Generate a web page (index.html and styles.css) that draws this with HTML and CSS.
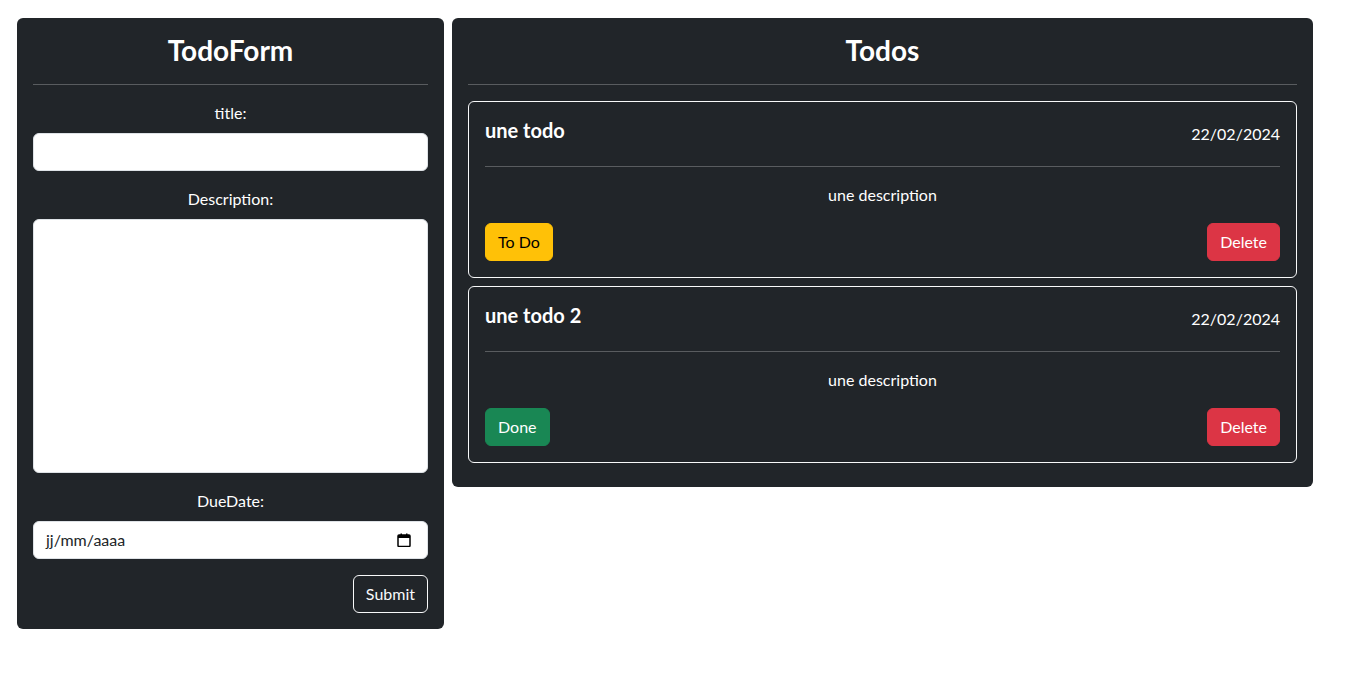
FILE: index.html
```html
<!DOCTYPE html>
<html lang="fr">
<head>
<meta charset="utf-8">
<title>Todos</title>
<link rel="stylesheet" href="styles.css">
</head>
<body>
<div class="app">
  <section class="panel form-panel">
    <h3 class="panel-title">TodoForm</h3>
    <hr class="rule">
    <form class="todo-form">
      <div class="field">
        <label class="field-label" for="title">title:</label>
        <input class="control" id="title" type="text">
      </div>
      <div class="field">
        <label class="field-label" for="desc">Description:</label>
        <textarea class="control area" id="desc"></textarea>
      </div>
      <div class="field">
        <label class="field-label">DueDate:</label>
        <div class="control date">
          <span class="date-text">jj/mm/aaaa</span>
          <svg class="cal" width="14" height="14" viewBox="0 0 14 14">
            <rect x="1" y="2" width="12" height="11.5" rx="1" fill="none" stroke="#000" stroke-width="1.5"/>
            <rect x="1" y="2" width="12" height="3" fill="#000"/>
            <rect x="3.5" y="0.5" width="1.5" height="2.5" fill="#000"/>
            <rect x="9" y="0.5" width="1.5" height="2.5" fill="#000"/>
          </svg>
        </div>
      </div>
      <div class="actions">
        <button type="button" class="btn btn-outline">Submit</button>
      </div>
    </form>
  </section>

  <section class="panel list-panel">
    <h3 class="panel-title">Todos</h3>
    <hr class="rule">
    <div class="todo">
      <div class="todo-head">
        <h5 class="todo-title">une todo</h5>
        <span class="todo-date">22/02/2024</span>
      </div>
      <hr class="rule">
      <p class="todo-desc">une description</p>
      <div class="todo-actions">
        <button type="button" class="btn btn-warning">To Do</button>
        <button type="button" class="btn btn-danger">Delete</button>
      </div>
    </div>
    <div class="todo">
      <div class="todo-head">
        <h5 class="todo-title">une todo 2</h5>
        <span class="todo-date">22/02/2024</span>
      </div>
      <hr class="rule">
      <p class="todo-desc">une description</p>
      <div class="todo-actions">
        <button type="button" class="btn btn-success">Done</button>
        <button type="button" class="btn btn-danger">Delete</button>
      </div>
    </div>
  </section>
</div>
</body>
</html>
```

FILE: styles.css
```css
* { box-sizing: border-box; }

body {
  margin: 0;
  background: #fff;
  font-family: Lato, "Noto Sans", sans-serif;
  font-size: 16px;
  line-height: 1.5;
  color: #212529;
}

.app {
  display: flex;
  align-items: flex-start;
  gap: 8px;
  padding: 18px 0 0 17px;
}

.panel {
  background: #212529;
  color: #fff;
  border-radius: 6px;
  padding: 16px;
}

.form-panel { width: 427px; }
.list-panel { width: 861px; }

.panel-title {
  margin: 0;
  font-size: 28px;
  font-weight: 700;
  line-height: 1.2;
  text-align: center;
}

.rule {
  margin: 16px 0;
  border: 0;
  border-top: 1px solid #595c5f;
  height: 0;
}

.todo-form { display: flex; flex-direction: column; gap: 16px; }

.field { display: flex; flex-direction: column; }

.field-label {
  text-align: center;
  margin-bottom: 8px;
  line-height: 24px;
}

.control {
  display: block;
  width: 100%;
  height: 38px;
  padding: 6px 12px;
  font: inherit;
  color: #212529;
  background: #fff;
  border: 1px solid #dee2e6;
  border-radius: 6px;
}

.area {
  height: 254px;
  resize: none;
}

.date {
  display: flex;
  align-items: center;
  justify-content: space-between;
  padding-right: 16px;
}

.date-text { line-height: 24px; }

.cal { display: block; }

.actions { display: flex; justify-content: flex-end; }

.btn {
  font: inherit;
  line-height: 24px;
  padding: 6px 12px;
  border-radius: 6px;
  border: 1px solid transparent;
  cursor: pointer;
}

.btn-outline { background: transparent; color: #f8f9fa; border-color: #f8f9fa; }
.btn-warning { background: #ffc107; border-color: #ffc107; color: #000; }
.btn-danger { background: #dc3545; border-color: #dc3545; color: #fff; }
.btn-success { background: #198754; border-color: #198754; color: #fff; }

.todo {
  border: 1px solid #f8f9fa;
  border-radius: 6px;
  padding: 16px;
  margin-bottom: 8px;
}

.todo-head {
  display: flex;
  align-items: center;
  justify-content: space-between;
}

.todo-title {
  margin: 0 0 8px;
  font-size: 20px;
  font-weight: 700;
  line-height: 1.2;
}

.todo-date { line-height: 24px; }

.todo-head + .rule { margin-top: 16px; }

.todo-desc {
  margin: 0 0 16px;
  text-align: center;
}

.todo-actions {
  display: flex;
  justify-content: space-between;
}
```
